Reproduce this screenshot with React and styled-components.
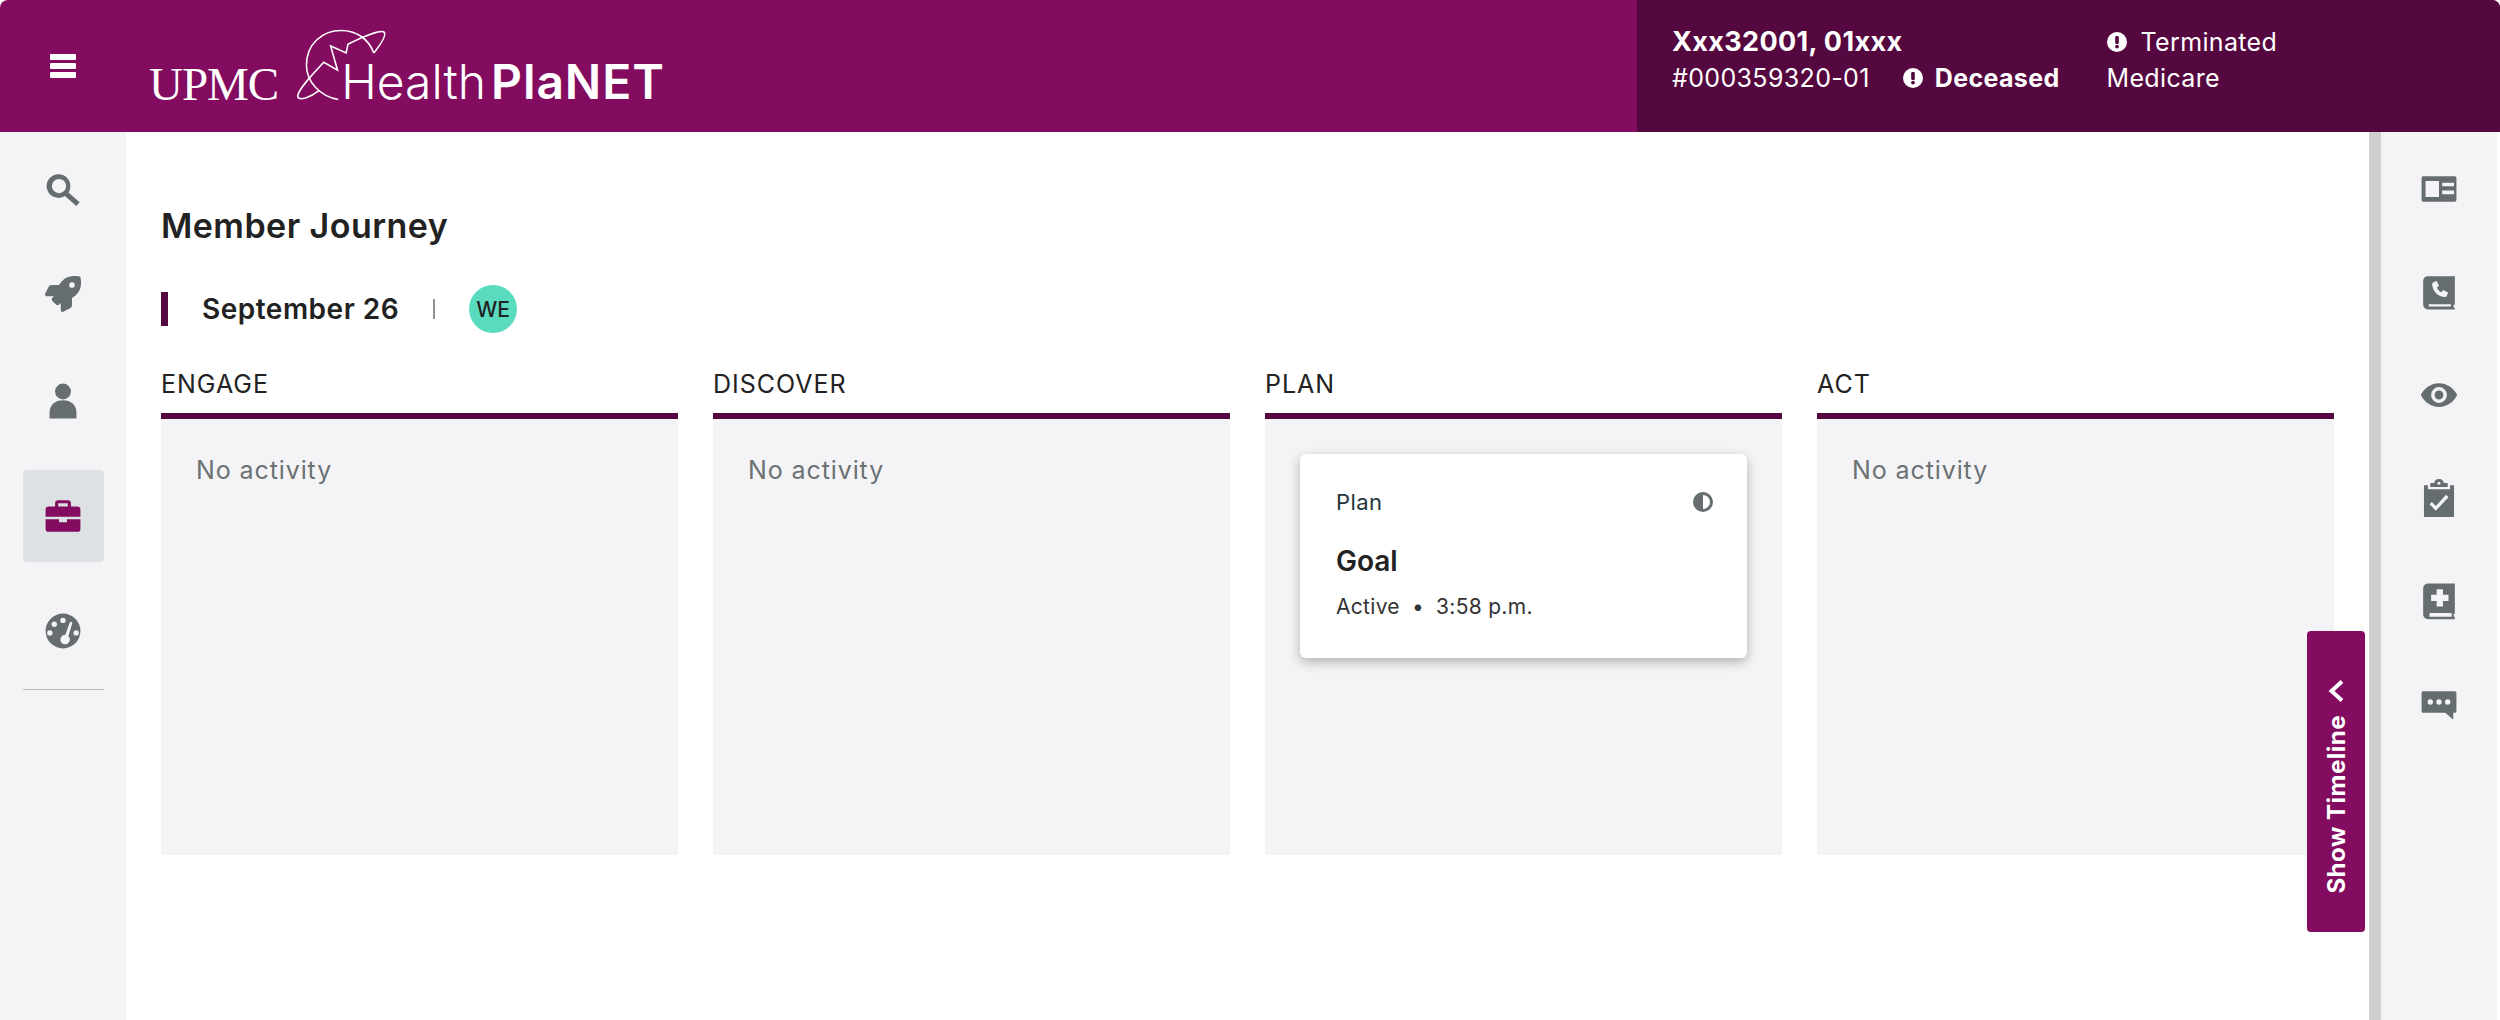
import React from 'react';
import styled, { createGlobalStyle } from 'styled-components';
import { FaRocket } from 'react-icons/fa';

const PLUM = '#830c60';
const DARK = '#55073f';
const ICON = '#656d70';
const PANEL = '#f4f4f6';

const GlobalStyle = createGlobalStyle`
  html, body { margin: 0; padding: 0; background: #fff; }
  body { font-family: Inter, "Open Sans", sans-serif; color: #222; }
`;

const Page = styled.div`
  width: 2500px;
  height: 1020px;
  display: flex;
  flex-direction: column;
  overflow: hidden;
`;

/* header */
const Header = styled.header`
  height: 132px;
  display: flex;
  align-items: stretch;
  background: ${PLUM};
  border-radius: 8px 8px 0 0;
  overflow: hidden;
  color: #fff;
`;

const MenuButton = styled.button`
  width: 126px;
  border: 0;
  padding: 0;
  background: none;
  display: flex;
  align-items: center;
  justify-content: center;
  color: #fff;
`;

const Logo = styled.div`
  flex: 1;
  display: flex;
  align-items: flex-start;
  padding: 27px 0 0 23px;
`;

const Upmc = styled.span`
  font-family: "Liberation Serif", serif;
  font-size: 47px;
  line-height: 1;
  letter-spacing: -1px;
  margin-top: 34px;
`;

const Health = styled.span`
  font-size: 48px;
  line-height: 1;
  font-weight: 300;
  margin: 31px 0 0 -49px;
  white-space: nowrap;
  b { font-weight: 600; margin-left: 5px; letter-spacing: 0.9px; }
`;

const Member = styled.div`
  width: 863px;
  background: ${DARK};
  display: flex;
  gap: 47px;
  padding: 27px 0 0 35px;
  box-sizing: border-box;
`;

const MemberCol = styled.div`
  display: flex;
  flex-direction: column;
  gap: 7px;
`;

const MemberRow = styled.div`
  display: flex;
  align-items: center;
  gap: ${p => p.$gap || 12}px;
  height: 29px;
  font-size: ${p => p.$size || 25}px;
  font-weight: ${p => p.$weight || 400};
  letter-spacing: 0.35px;
  white-space: nowrap;
`;

/* body */
const Body = styled.div`
  flex: 1;
  display: flex;
  min-height: 0;
`;

const LeftRail = styled.nav`
  width: 126px;
  background: ${PANEL};
  display: flex;
  flex-direction: column;
  align-items: center;
  padding-top: 12px;
`;

const RailItem = styled.div`
  width: 81px;
  height: 92px;
  margin-bottom: 23px;
  display: flex;
  align-items: center;
  justify-content: center;
  border-radius: 4px;
  background: ${p => (p.$active ? '#dee1e3' : 'transparent')};
  color: ${p => (p.$active ? PLUM : ICON)};

  &:nth-child(1) { margin-bottom: 12px; }
  &:nth-child(2) { margin-bottom: 15px; }
`;

const RailRule = styled.div`
  width: 81px;
  height: 1px;
  background: #b4b9bb;
  margin-top: -11px;
`;

const Main = styled.main`
  flex: 1;
  min-width: 0;
  position: relative;
  padding: 76px 35px 0;
`;

const Title = styled.h1`
  margin: 0;
  font-size: 34px;
  line-height: 36px;
  font-weight: 600;
  letter-spacing: 0.45px;
`;

const DateRow = styled.div`
  display: flex;
  align-items: center;
  margin-top: 41px;
  height: 48px;
`;

const DateLabel = styled.div`
  border-left: 7px solid ${DARK};
  padding-left: 34px;
  height: 34px;
  line-height: 34px;
  font-size: 28px;
  font-weight: 600;
  letter-spacing: 0.5px;
  white-space: nowrap;
`;

const DateSep = styled.div`
  width: 2px;
  height: 20px;
  background: #8b9092;
  margin: 0 34px;
`;

const Avatar = styled.div`
  width: 48px;
  height: 48px;
  border-radius: 50%;
  background: #5adbc0;
  display: flex;
  align-items: center;
  justify-content: center;
  font-size: 21px;
  font-weight: 500;
`;

const Columns = styled.div`
  display: grid;
  grid-template-columns: repeat(4, 1fr);
  gap: 35px;
  margin-top: 37px;
`;

const ColumnTitle = styled.div`
  font-size: 25px;
  line-height: 28px;
  font-weight: 400;
  letter-spacing: 1px;
  padding-bottom: 15px;
  border-bottom: 6px solid ${DARK};
`;

const ColumnBody = styled.div`
  height: 436px;
  background: ${PANEL};
  padding: 36px 35px 0;
  box-sizing: border-box;
`;

const Empty = styled.div`
  font-size: 25px;
  line-height: 30px;
  letter-spacing: 0.9px;
  color: #6b7274;
`;

const Card = styled.div`
  height: 204px;
  margin-top: -1px;
  background: #fff;
  border-radius: 6px;
  box-shadow: 0 4px 12px rgba(0, 0, 0, 0.28);
  padding: 36px 34px 0 36px;
  box-sizing: border-box;
`;

const CardTop = styled.div`
  display: flex;
  justify-content: space-between;
  align-items: center;
  font-size: 22px;
  line-height: 24px;
  letter-spacing: 0.4px;
  color: #24343a;
`;

const CardTitle = styled.div`
  margin-top: 31px;
  font-size: 28px;
  line-height: 32px;
  font-weight: 600;
`;

const CardMeta = styled.div`
  margin-top: 17px;
  font-size: 21px;
  line-height: 26px;
  letter-spacing: 0.3px;
  color: #333;
  span { margin: 0 12px; }
`;

const TimelineTab = styled.button`
  position: absolute;
  right: 4px;
  top: 499px;
  width: 58px;
  height: 301px;
  border: 0;
  border-radius: 4px;
  background: ${PLUM};
  color: #fff;
  display: flex;
  flex-direction: column;
  align-items: center;
  padding: 48px 0 0;
  gap: 12px;
  font-family: inherit;
`;

const TimelineText = styled.span`
  writing-mode: vertical-rl;
  transform: rotate(180deg);
  font-size: 24px;
  font-weight: 700;
  letter-spacing: 0.5px;
  white-space: nowrap;
`;

const Splitter = styled.div`
  width: 12px;
  background: #cfcfcf;
`;

const RightRail = styled.nav`
  width: 116px;
  background: ${PANEL};
  display: flex;
  flex-direction: column;
  align-items: center;
  padding-top: 20px;
`;

const RightItem = styled.div`
  height: 103px;
  width: 100%;
  flex: none;
  display: flex;
  align-items: flex-start;
  justify-content: center;
  padding-top: 18px;
  box-sizing: border-box;
  color: ${ICON};
`;

const Edge = styled.div`
  width: 3px;
  background: #fff;
`;

/* drawings */
const Icon = ({ size = 38, view = '0 0 24 24', children }) => (
  <svg width={size} height={size} viewBox={view} fill="currentColor">{children}</svg>
);

const Burger = () => (
  <svg width="26" height="24" viewBox="0 0 26 24" fill="currentColor">
    <rect width="26" height="6" y="0" rx="1" />
    <rect width="26" height="6" y="9" rx="1" />
    <rect width="26" height="6" y="18" rx="1" />
  </svg>
);

const Globe = () => (
  <svg width="98" height="76" viewBox="480 55 280 220" fill="none" stroke="#fff" strokeWidth="4.5" style={{ marginLeft: 14, flex: 'none' }}>
    <path d="M612 265C560 255 520 215 520 165C520 105 565 65 620 65C665 65 700 90 715 130" />
    <path d="M715 130C735 105 752 80 745 70C735 62 680 85 640 105L635 130L590 110L610 180L570 157C540 190 490 240 495 258C500 268 530 260 555 240" />
  </svg>
);

const Alert = ({ size = 20 }) => (
  <svg width={size} height={size} viewBox="0 0 20 20" style={{ flex: 'none' }}>
    <circle cx="10" cy="10" r="10" fill="#fff" />
    <rect x="8.2" y="4" width="3.6" height="8" rx="1.2" fill={DARK} />
    <circle cx="10" cy="14.6" r="1.9" fill={DARK} />
  </svg>
);

const Half = () => (
  <svg width="20" height="20" viewBox="0 0 20 20" style={{ flex: 'none' }}>
    <circle cx="10" cy="10" r="8.5" fill="#fff" stroke={ICON} strokeWidth="3" />
    <path d="M10 1a9 9 0 0 0 0 18z" fill={ICON} />
  </svg>
);

const Chevron = () => (
  <svg width="16" height="24" viewBox="0 0 16 24" fill="none" stroke="#fff" strokeWidth="4">
    <path d="M14 2.5 3.5 12 14 21.5" />
  </svg>
);

const SearchIcon = () => (
  <Icon>
    <path d="M9.500 2a7.500 7.500 0 0 1 6 11.500l7 6.200-2.100 2.400-7.200-6.300A7.500 7.500 0 1 1 9.500 2zm0 3a4.500 4.500 0 1 0 0 9 4.500 4.500 0 0 0 0-9z" />
  </Icon>
);

const RocketIcon = () => <FaRocket size={36} />;

const PersonIcon = () => (
  <Icon>
    <circle cx="12" cy="6" r="5" />
    <path d="M3.500 23v-3.500C3.500 14.500 7 11.500 12 11.500s8.500 3 8.500 8V23z" />
  </Icon>
);

const BriefcaseIcon = () => (
  <Icon>
    <path d="M9 2h6a2 2 0 0 1 2 2v2h4a2 2 0 0 1 2 2v4.500H1V8a2 2 0 0 1 2-2h4V4a2 2 0 0 1 2-2zm0 2v2h6V4z" fillRule="evenodd" />
    <path d="M1 14h8.500v2h5v-2H23v6a2 2 0 0 1-2 2H3a2 2 0 0 1-2-2z" />
  </Icon>
);

const GaugeIcon = () => (
  <Icon>
    <path
      fillRule="evenodd"
      d="M12 1a11 11 0 1 1 0 22 11 11 0 0 1 0-22zm0 2.600a1.700 1.700 0 1 0 0 3.400 1.700 1.700 0 0 0 0-3.400zM6.500 6a1.700 1.700 0 1 0 0 3.400 1.700 1.700 0 0 0 0-3.400zM3.700 11.500a1.700 1.700 0 1 0 0 3.400 1.700 1.700 0 0 0 0-3.400zm16.600 0a1.700 1.700 0 1 0 0 3.400 1.700 1.700 0 0 0 0-3.400zM16.200 6.800l-2.700 7.600a3 3 0 1 0 1.900.8l2.400-7.900a.8.8 0 0 0-1.600-.5z"
    />
  </Icon>
);

const IdCardIcon = () => (
  <Icon>
    <path
      fillRule="evenodd"
      d="M2 4h20a1 1 0 0 1 1 1v14a1 1 0 0 1-1 1H2a1 1 0 0 1-1-1V5a1 1 0 0 1 1-1zm1.500 3v10h8.500V7zm10.500 1v2.300h7.500V8zm0 5v2.300h7.500V13z"
    />
  </Icon>
);

const PhoneBookIcon = () => (
  <Icon>
    <path
      fillRule="evenodd"
      d="M5 2h17v18h-.8v2H22v1H5a3 3 0 0 1-3-3V5a3 3 0 0 1 3-3zm.5 17.800V21.200H19.500V19.800zM8.500 5.800l2-.7 1.500 3-1.300 1.200c.6 1.300 1.500 2.200 2.800 2.800l1.200-1.300 3 1.500-.7 2c-.4.700-1 1-1.800.9-4-.6-6.800-3.400-7.500-7.500-.1-.9.2-1.500.8-1.900z"
    />
  </Icon>
);

const EyeIcon = () => (
  <Icon>
    <path
      fillRule="evenodd"
      d="M12 4.500c5 0 9.300 3 11.500 7.500-2.200 4.500-6.500 7.500-11.500 7.500S2.700 16.500.5 12C2.700 7.500 7 4.500 12 4.500zm0 2.500a5 5 0 1 0 0 10 5 5 0 0 0 0-10zm0 2.200a2.800 2.800 0 1 1 0 5.600 2.800 2.800 0 0 1 0-5.600z"
    />
  </Icon>
);

const ClipboardIcon = () => (
  <Icon>
    <path
      fillRule="evenodd"
      d="M12 0a3 3 0 0 1 3 2.600h2.500V5h-11V2.600H9A3 3 0 0 1 12 0zm0 1.700a1 1 0 1 0 0 2 1 1 0 0 0 0-2zM2.500 4H5v2.500h14V4h2.500v20h-19zM7.500 14.500l-1.500 1.500 4 4 8-8.500-1.500-1.500-6.500 7z"
    />
  </Icon>
);

const MedBookIcon = () => (
  <Icon>
    <path
      fillRule="evenodd"
      d="M5 1h17v19h-.7v2h.7v1.500H5a3 3 0 0 1-3-3V4a3 3 0 0 1 3-3zm1 18.500V22h14v-2.500zM10.500 4.500v3.500H7v4h3.500v3.500h4V12H18V8h-3.500V4.500z"
    />
  </Icon>
);

const ChatIcon = () => (
  <Icon>
    <path
      fillRule="evenodd"
      d="M2 4h20a1 1 0 0 1 1 1v11.500a1 1 0 0 1-1 1h-1v4.500l-5-4.500H2a1 1 0 0 1-1-1V5a1 1 0 0 1 1-1zm4.500 5a1.700 1.700 0 1 0 0 3.400 1.700 1.700 0 0 0 0-3.400zm5.500 0a1.700 1.700 0 1 0 0 3.400 1.700 1.700 0 0 0 0-3.400zm5.500 0a1.700 1.700 0 1 0 0 3.400 1.700 1.700 0 0 0 0-3.400z"
    />
  </Icon>
);

const leftIcons = [SearchIcon, RocketIcon, PersonIcon, BriefcaseIcon, GaugeIcon];
const rightIcons = [IdCardIcon, PhoneBookIcon, EyeIcon, ClipboardIcon, MedBookIcon, ChatIcon];

const stages = ['ENGAGE', 'DISCOVER', 'PLAN', 'ACT'];

export default function App() {
  return (
    <Page>
      <GlobalStyle />
      <Header>
        <MenuButton aria-label="Menu"><Burger /></MenuButton>
        <Logo>
          <Upmc>UPMC</Upmc>
          <Globe />
          <Health>Health<b>PlaNET</b></Health>
        </Logo>
        <Member>
          <MemberCol>
            <MemberRow $size={27} $weight={700}>Xxx32001, 01xxx</MemberRow>
            <MemberRow $gap={33}>
              #000359320-01
              <MemberRow as="span" $weight={700}><Alert />Deceased</MemberRow>
            </MemberRow>
          </MemberCol>
          <MemberCol>
            <MemberRow $gap={14}><Alert />Terminated</MemberRow>
            <MemberRow>Medicare</MemberRow>
          </MemberCol>
        </Member>
      </Header>
      <Body>
        <LeftRail>
          {leftIcons.map((Glyph, i) => (
            <RailItem key={i} $active={i === 3}><Glyph /></RailItem>
          ))}
          <RailRule />
        </LeftRail>
        <Main>
          <Title>Member Journey</Title>
          <DateRow>
            <DateLabel>September 26</DateLabel>
            <DateSep />
            <Avatar>WE</Avatar>
          </DateRow>
          <Columns>
            {stages.map(stage => (
              <div key={stage}>
                <ColumnTitle>{stage}</ColumnTitle>
                <ColumnBody>
                  {stage === 'PLAN' ? (
                    <Card>
                      <CardTop>Plan<Half /></CardTop>
                      <CardTitle>Goal</CardTitle>
                      <CardMeta>Active<span>•</span>3:58 p.m.</CardMeta>
                    </Card>
                  ) : (
                    <Empty>No activity</Empty>
                  )}
                </ColumnBody>
              </div>
            ))}
          </Columns>
          <TimelineTab>
            <Chevron />
            <TimelineText>Show Timeline</TimelineText>
          </TimelineTab>
        </Main>
        <Splitter />
        <RightRail>
          {rightIcons.map((Glyph, i) => (
            <RightItem key={i}><Glyph /></RightItem>
          ))}
        </RightRail>
        <Edge />
      </Body>
    </Page>
  );
}
